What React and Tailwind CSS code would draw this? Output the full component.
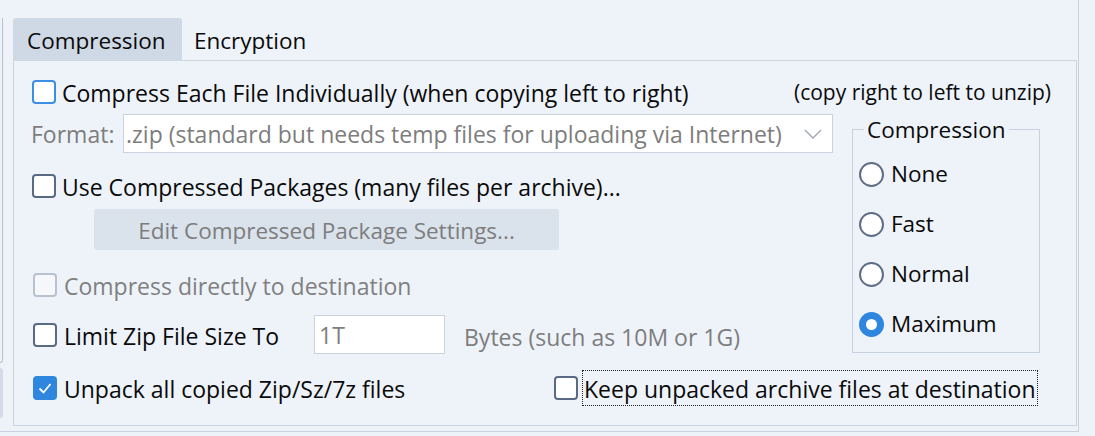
import React from 'react'

function Box({ state = 'off' }) {
  // off | focus | disabled | on
  if (state === 'on') {
    return (
      <span className="w-[24px] h-[24px] shrink-0 rounded-[4px] bg-[#2f86de] flex items-center justify-center">
        <svg width="18" height="18" viewBox="0 0 18 18">
          <path d="M3.5 9.5 L7.5 13.5 L14.5 5" fill="none" stroke="#fff" strokeWidth="1.8" />
        </svg>
      </span>
    )
  }
  const cls =
    state === 'focus'
      ? 'border-[#3b8ee3] bg-white'
      : state === 'disabled'
      ? 'border-[#b8c1cd] bg-[#f5f7fa]'
      : 'border-[#5a6984] bg-white'
  return <span className={`w-[24px] h-[24px] shrink-0 rounded-[4px] border-2 ${cls}`} />
}

function Radio({ label, on }) {
  return (
    <div className="h-[50px] flex items-center gap-[7px] pl-[6px]">
      {on ? (
        <span className="w-[25px] h-[25px] rounded-full bg-[#2f86de] flex items-center justify-center">
          <span className="w-[11px] h-[11px] rounded-full bg-white" />
        </span>
      ) : (
        <span className="w-[25px] h-[25px] rounded-full border-2 border-[#5f6d85] bg-white" />
      )}
      <span>{label}</span>
    </div>
  )
}

export default function App() {
  return (
    <div className="w-[1095px] h-[436px] bg-[#eef3fa] overflow-hidden font-['Open_Sans',sans-serif] text-[23px] text-[#0a0a0a] leading-none">
      <div className="flex w-[1079px] h-[432px] border-r border-b border-[#c8d2de]">
        <div className="w-[3px] shrink-0 flex flex-col">
          <div className="mt-[18px] h-[345px] border-r border-b border-[#b9c3cf] rounded-br-[3px]" />
          <div className="mt-[5px] h-[50px] bg-[#d3dce6] rounded-r-[3px]" />
        </div>

        <div className="ml-[10px] mt-[18px] w-[1064px] flex flex-col">
          <div className="h-[43px] flex text-[22.5px]">
            <div className="w-[169px] h-[43px] bg-[#cfd9e5] rounded-t-[3px] pl-[14px] pt-[4px] flex items-center">Compression</div>
            <div className="flex-1 border-b border-[#cbd5e0] pl-[12px] pt-[4px] flex items-center">Encryption</div>
          </div>

          <div className="h-[365px] border-l border-r border-b border-[#cbd5e0] pl-[18px] pr-[25px]">
            <div className="mt-[13px] h-[36px] flex items-center justify-between">
              <label className="flex items-center gap-[6px]">
                <Box state="focus" />
                <span className="mt-[3px]">Compress Each File Individually (when copying left to right)</span>
              </label>
              <span className="text-[21px]">(copy right to left to unzip)</span>
            </div>

            <div className="flex">
              <div className="w-[820px] shrink-0">
                <div className="mt-[4px] h-[39px] flex items-center -ml-px">
                  <span className="w-[92px] text-[#7d7d7d] mt-[2px]">Format:</span>
                  <div className="w-[710px] h-[39px] bg-white border border-[#c9d2dd] flex items-center justify-between pl-[2px] pr-[10px]">
                    <span className="text-[#7d7d7d] mt-[2px]">.zip (standard but needs temp files for uploading via Internet)</span>
                    <svg width="18" height="10" viewBox="0 0 18 10">
                      <path d="M1 1 L9 9 L17 1" fill="none" stroke="#9ea6b2" strokeWidth="1.3" />
                    </svg>
                  </div>
                </div>

                <label className="mt-[15px] h-[36px] flex items-center gap-[6px]">
                  <Box />
                  <span className="mt-[3px]">Use Compressed Packages (many files per archive)...</span>
                </label>

                <div className="mt-[5px] ml-[62px] w-[465px] h-[41px] rounded-[3px] bg-[#dae2eb] text-[#7d7d7d] text-[22.5px] pt-[3px] flex items-center justify-center">
                  Edit Compressed Package Settings...
                </div>

                <label className="mt-[17px] ml-px h-[36px] flex items-center gap-[7px] text-[#808080]">
                  <Box state="disabled" />
                  <span className="mt-[3px]">Compress directly to destination</span>
                </label>

                <div className="mt-[12px] ml-px h-[39px] flex items-center">
                  <Box />
                  <span className="ml-[7px] w-[250px] mt-[3px]">Limit Zip File Size To</span>
                  <div className="w-[131px] h-[39px] bg-white border border-[#c9d2dd] text-[#7d7d7d] flex items-center pl-[4px] pt-[1px]">1T</div>
                  <span className="ml-[19px] text-[#7d7d7d] mt-[6px]">Bytes (such as 10M or 1G)</span>
                </div>
              </div>

              <fieldset className="ml-0 mt-[6px] w-[188px] h-[237px] border border-[#c7d1dd] pb-[2px] text-[22.5px]">
                <legend className="ml-[11px] px-[3px] leading-[27px]">Compression</legend>
                <div className="pt-[6px]">
                  <Radio label="None" />
                  <Radio label="Fast" />
                  <Radio label="Normal" />
                  <Radio label="Maximum" on />
                </div>
              </fieldset>
            </div>

            <div className="mt-[16px] ml-px h-[36px] flex items-center">
              <Box state="on" />
              <span className="ml-[7px] w-[490px] mt-[3px]">Unpack all copied Zip/Sz/7z files</span>
              <Box />
              <span className="ml-[4px] h-[36px] px-px pt-[3px] flex items-center border border-dotted border-[#222]">
                Keep unpacked archive files at destination
              </span>
            </div>
          </div>
        </div>
      </div>
    </div>
  )
}
